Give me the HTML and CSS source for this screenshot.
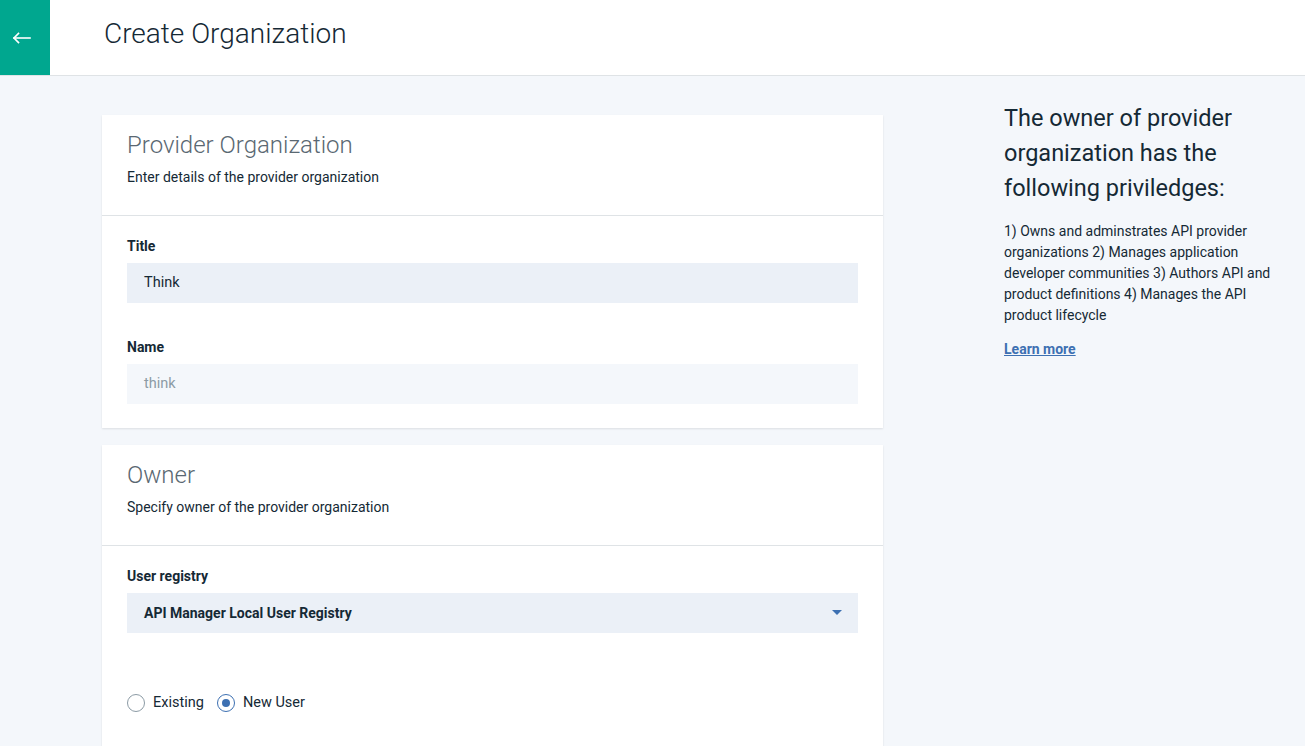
FILE: index.html
```html
<!DOCTYPE html>
<html lang="en">
<head>
<meta charset="utf-8">
<title>Create Organization</title>
<link rel="stylesheet" href="styles.css">
</head>
<body>
<header class="topbar">
  <a class="back" href="#" aria-label="Back">
    <svg width="20" height="12" viewBox="0 0 20 12" fill="none" stroke="#fff" stroke-width="1.6" stroke-linecap="square">
      <path d="M2 6 H18"/>
      <path d="M6.5 1.5 L2 6 L6.5 10.5"/>
    </svg>
  </a>
  <h1 class="page-title">Create Organization</h1>
</header>
<main class="main">
  <div class="form-col">
    <section class="card">
      <div class="card-head">
        <h2 class="card-title">Provider Organization</h2>
        <p class="card-sub">Enter details of the provider organization</p>
      </div>
      <div class="card-body">
        <div class="field">
          <label class="field-label">Title</label>
          <div class="input">Think</div>
        </div>
        <div class="field">
          <label class="field-label">Name</label>
          <div class="input input-disabled">think</div>
        </div>
      </div>
    </section>
    <section class="card card-owner">
      <div class="card-head">
        <h2 class="card-title">Owner</h2>
        <p class="card-sub">Specify owner of the provider organization</p>
      </div>
      <div class="card-body">
        <div class="field">
          <label class="field-label">User registry</label>
          <div class="input select">
            <span>API Manager Local User Registry</span>
            <svg class="caret" width="10" height="5" viewBox="0 0 10 5"><path d="M0 0 H10 L5 5 Z" fill="#3d70b2"/></svg>
          </div>
        </div>
        <div class="radios">
          <label class="radio"><span class="dot"></span>Existing</label>
          <label class="radio radio-on"><span class="dot"></span>New User</label>
        </div>
      </div>
    </section>
  </div>
  <aside class="info">
    <h3 class="info-title">The owner of provider organization has the following priviledges:</h3>
    <p class="info-text">1) Owns and adminstrates API provider organizations 2) Manages application developer communities 3) Authors API and product definitions 4) Manages the API product lifecycle</p>
    <a class="info-link" href="#">Learn more</a>
  </aside>
</main>
</body>
</html>
```

FILE: styles.css
```css
* { box-sizing: border-box; }
html, body { margin: 0; padding: 0; }
body {
  font-family: Roboto, "Liberation Sans", sans-serif;
  background: #f4f7fb;
  color: #152935;
  height: 746px;
  overflow: hidden;
}
.topbar {
  display: flex;
  align-items: center;
  height: 76px;
  background: #fff;
  border-bottom: 1px solid #dfe3e6;
}
.back {
  display: flex;
  align-items: center;
  justify-content: flex-start;
  padding-left: 12px;
  width: 50px;
  height: 75px;
  background: #00a78f;
  align-self: flex-start;
}
.page-title {
  margin: 0 0 8px 54px;
  font-size: 28px;
  font-weight: 300;
  color: #152935;
  line-height: 36px;
}
.main {
  display: flex;
  align-items: flex-start;
  padding: 25px 0 0 102px;
  gap: 121px;
}
.form-col {
  width: 781px;
  margin-top: 14px;
  display: flex;
  flex-direction: column;
  gap: 17px;
}
.card {
  background: #fff;
  box-shadow: 0 1px 2px rgba(0, 0, 0, 0.1);
}
.card-head {
  padding: 14px 25px 28px;
  border-bottom: 1px solid #dfe3e6;
}
.card-title {
  margin: 0;
  font-size: 24px;
  font-weight: 300;
  line-height: 32px;
  color: #5a6872;
}
.card-sub {
  margin: 0;
  padding-top: 6px;
  font-size: 14px;
  line-height: 20px;
  color: #152935;
}
.card-body {
  padding: 20px 25px 24px;
}
.field + .field { margin-top: 34px; }
.field-label {
  display: block;
  font-size: 14px;
  font-weight: 700;
  line-height: 20px;
  margin-bottom: 7px;
  color: #152935;
}
.input {
  height: 40px;
  display: flex;
  align-items: center;
  padding: 0 16px 1px 17px;
  background: #ebf0f7;
  font-size: 14.5px;
  color: #152935;
}
.input-disabled {
  background: #f4f7fb;
  color: #8c9ba5;
}
.select {
  justify-content: space-between;
  font-weight: 700;
  font-size: 14px;
}
.radios {
  display: flex;
  gap: 13px;
  margin-top: 60px;
  padding-bottom: 80px;
}
.radio {
  display: flex;
  align-items: center;
  gap: 8px;
  font-size: 14.5px;
  line-height: 20px;
  color: #152935;
}
.dot {
  width: 18px;
  height: 18px;
  border-radius: 50%;
  border: 1px solid #8c9ba5;
  display: inline-flex;
  align-items: center;
  justify-content: center;
  background: #fff;
}
.radio-on .dot { border-color: #3d70b2; }
.radio-on .dot::after {
  content: "";
  width: 8px;
  height: 8px;
  border-radius: 50%;
  background: #3d70b2;
}
.info {
  width: 282px;
}
.info-title {
  margin: 0;
  font-size: 23.5px;
  font-weight: 400;
  line-height: 35px;
  color: #152935;
}
.info-text {
  margin: 15px 0 0;
  font-size: 14px;
  line-height: 21px;
  color: #152935;
}
.info-link {
  display: inline-block;
  margin-top: 13px;
  font-size: 14px;
  line-height: 21px;
  font-weight: 700;
  color: #3d70b2;
  text-decoration: underline;
}
```
